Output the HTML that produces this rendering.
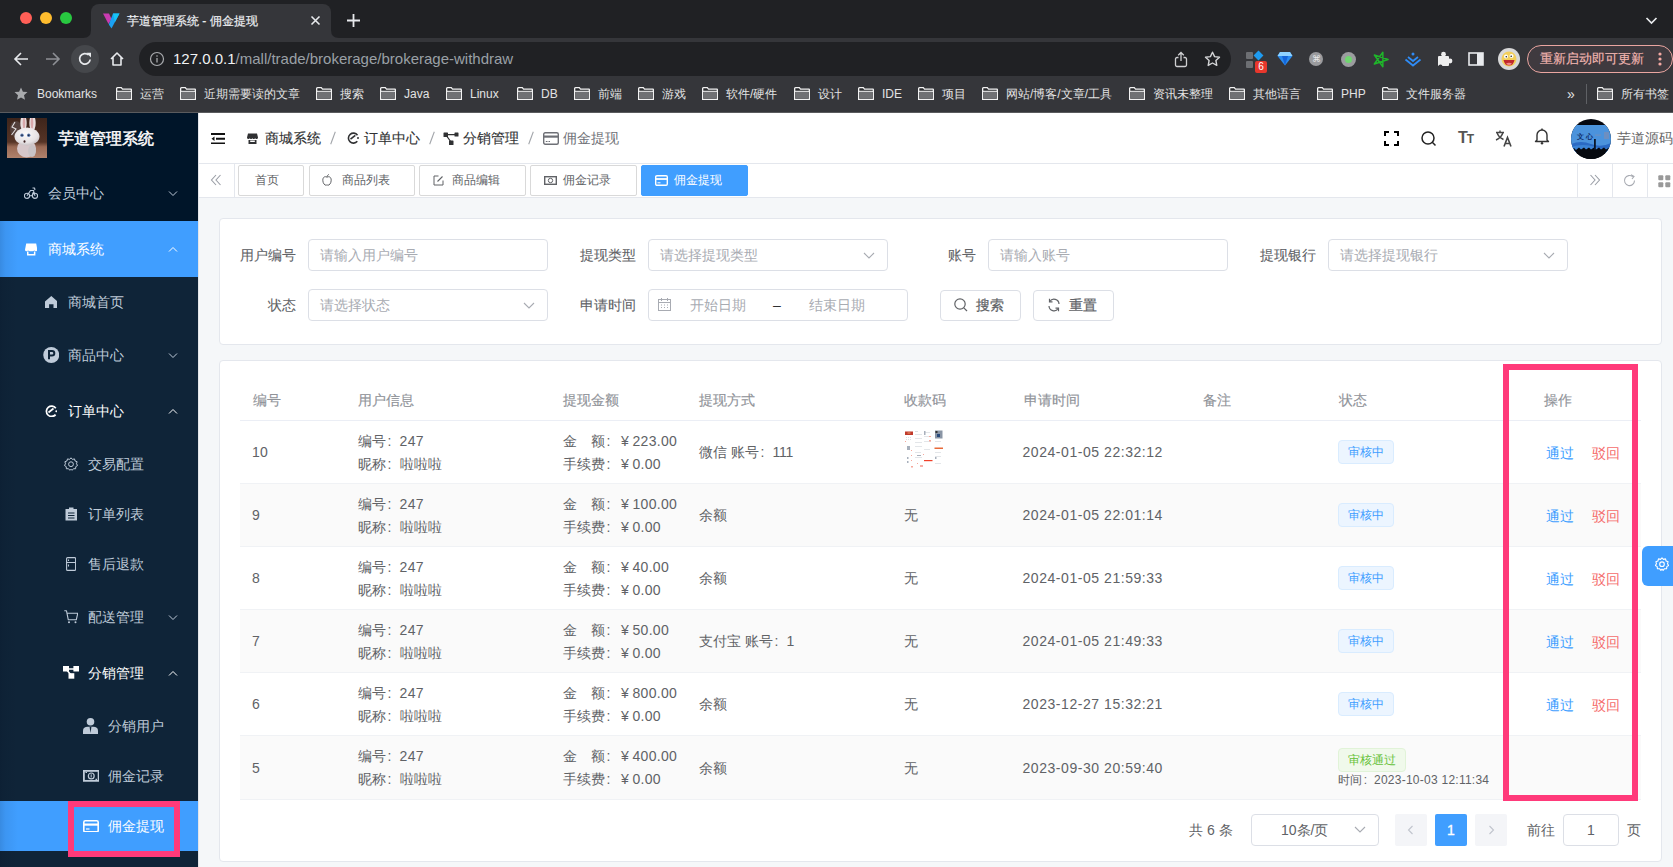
<!DOCTYPE html>
<html><head><meta charset="utf-8">
<style>
*{box-sizing:border-box;margin:0;padding:0}
html,body{width:1673px;height:867px;overflow:hidden;background:#202124;font-family:"Liberation Sans",sans-serif;}
.a{position:absolute}
svg{display:block}
/* chrome */
#tabstrip{left:0;top:0;width:1673px;height:38px;background:#202124}
.tl{width:12px;height:12px;border-radius:50%;top:11.5px}
#tab{left:91px;top:4px;width:240px;height:34px;background:#35363a;border-radius:8px 8px 0 0}
#toolbar{left:0;top:38px;width:1673px;height:38px;background:#35363a}
#omni{left:139px;top:42px;width:1092px;height:34px;background:#202124;border-radius:17px}
#bmbar{left:0;top:76px;width:1673px;height:36px;background:#35363a}
.bm{top:85px;height:18px;font-size:12px;line-height:18px;color:#e3e3e3;white-space:nowrap}
.fold{top:87px;width:16px;height:13px}
/* app */
#side{left:0;top:112px;width:198px;height:755px;background:#001529;overflow:hidden}
#main{left:198px;top:112px;width:1475px;height:755px;background:#f5f7f9}
.mi{position:absolute;left:0;width:198px;color:#bfcbd9;font-size:14px;white-space:nowrap}
.mi .t{position:absolute;top:50%;transform:translateY(-50%);line-height:20px}
.mi .ic{position:absolute;top:50%;transform:translateY(-50%)}
.arr{position:absolute;left:168px;top:50%;margin-top:-4px;width:10px;height:7px}
.sub{background:#0f2438}
</style></head><body>
<!-- ============ BROWSER CHROME ============ -->
<div id="tabstrip" class="a"></div>
<div class="a tl" style="left:20px;background:#ff5f57"></div>
<div class="a tl" style="left:40px;background:#febc2e"></div>
<div class="a tl" style="left:60px;background:#28c840"></div>
<div id="tab" class="a"></div>
<svg class="a" style="left:83px;top:30px" width="8" height="8"><path d="M0 8 Q8 8 8 0 L8 8Z" fill="#35363a"/></svg>
<svg class="a" style="left:331px;top:30px" width="8" height="8"><path d="M8 8 Q0 8 0 0 L0 8Z" fill="#35363a"/></svg>
<svg class="a" style="left:102px;top:12px" width="18" height="17" viewBox="0 0 18 17"><path d="M1 1.5 L7 1.5 L9.5 7 L6.5 12Z" fill="#c93bb0"/><path d="M11 1.5 L17.5 1.5 L9.5 16.5 L6.8 12.5Z" fill="#1ba1f2"/><path d="M11 1.5 L17.5 1.5 L13 10Z" fill="#17c5f5"/></svg>
<div class="a" style="left:127px;top:12.5px;font-size:12px;line-height:16px;color:#eceef1;white-space:nowrap;-webkit-text-stroke:0.2px">芋道管理系统 - 佣金提现</div>
<svg class="a" style="left:310px;top:15px" width="11" height="11"><path d="M1.5 1.5L9.5 9.5M9.5 1.5L1.5 9.5" stroke="#e8eaed" stroke-width="1.6"/></svg>
<svg class="a" style="left:346px;top:13px" width="15" height="15"><path d="M7.5 1V14M1 7.5H14" stroke="#e8eaed" stroke-width="1.8"/></svg>
<svg class="a" style="left:1645px;top:16px" width="13" height="9"><path d="M1.5 2L6.5 7L11.5 2" stroke="#e8eaed" stroke-width="1.7" fill="none"/></svg>

<div id="toolbar" class="a"></div>
<svg class="a" style="left:13px;top:52px" width="16" height="14"><path d="M15 7H2M8 1L2 7L8 13" stroke="#e8eaed" stroke-width="1.6" fill="none"/></svg>
<svg class="a" style="left:45px;top:52px" width="16" height="14"><path d="M1 7H14M8 1L14 7L8 13" stroke="#8e9095" stroke-width="1.6" fill="none"/></svg>
<div class="a" style="left:71px;top:45px;width:28px;height:28px;border-radius:50%;background:#45474b"></div>
<svg class="a" style="left:77px;top:51px" width="16" height="16" viewBox="0 0 16 16"><path d="M13.2 8.5A5.3 5.3 0 1 1 11.6 4" stroke="#e8eaed" stroke-width="1.7" fill="none"/><path d="M9.3 1.8H14V6.5Z" fill="#e8eaed"/></svg>
<svg class="a" style="left:109px;top:51px" width="16" height="16" viewBox="0 0 16 16"><path d="M2 8L8 2L14 8M4 6.5V14H12V6.5" stroke="#e8eaed" stroke-width="1.6" fill="none" stroke-linejoin="round"/></svg>
<div id="omni" class="a"></div>
<svg class="a" style="left:149px;top:51px" width="16" height="16"><circle cx="8" cy="8" r="6.5" stroke="#a9abae" stroke-width="1.2" fill="none"/><path d="M8 7V11.5" stroke="#a9abae" stroke-width="1.3"/><circle cx="8" cy="5" r="0.8" fill="#a9abae"/></svg>
<div class="a" style="left:173px;top:50px;font-size:15px;line-height:18px;white-space:nowrap;color:#9aa0a6"><span style="color:#f1f3f4">127.0.0.1</span>/mall/trade/brokerage/brokerage-withdraw</div>
<svg class="a" style="left:1174px;top:51px" width="14" height="17" viewBox="0 0 14 17"><path d="M7 1.5V10M4.2 4.3L7 1.5L9.8 4.3" stroke="#cfd0d2" stroke-width="1.3" fill="none"/><path d="M4.5 6.5H3A1.5 1.5 0 0 0 1.5 8V14A1.5 1.5 0 0 0 3 15.5H11A1.5 1.5 0 0 0 12.5 14V8A1.5 1.5 0 0 0 11 6.5H9.5" stroke="#cfd0d2" stroke-width="1.3" fill="none"/></svg>
<svg class="a" style="left:1204px;top:51px" width="17" height="16" viewBox="0 0 17 16"><path d="M8.5 1.2L10.6 5.6L15.5 6.2L11.9 9.5L12.8 14.4L8.5 12L4.2 14.4L5.1 9.5L1.5 6.2L6.4 5.6Z" stroke="#d4d5d7" stroke-width="1.4" fill="none" stroke-linejoin="round"/></svg>

<!-- extensions -->
<div class="a" style="left:1246px;top:52px;width:7px;height:7px;background:#6d6f73;border-radius:1px"></div>
<div class="a" style="left:1246px;top:61px;width:7px;height:7px;background:#6d6f73;border-radius:1px"></div>
<div class="a" style="left:1255px;top:52px;width:7px;height:7px;background:#1e9bf0;transform:rotate(45deg)"></div>
<div class="a" style="left:1255px;top:61px;width:12px;height:12px;background:#e8372c;border-radius:2px;color:#fff;font-size:10px;line-height:12px;text-align:center">6</div>
<svg class="a" style="left:1277px;top:51px" width="16" height="15" viewBox="0 0 16 15"><path d="M3 1H13L15.5 5L8 14.5L0.5 5Z" fill="#2a8cf0"/><path d="M3 1H13L15.5 5H0.5Z" fill="#8fd3ff"/><path d="M5 5L8 14.5L11 5Z" fill="#1565d8"/></svg>
<div class="a" style="left:1309px;top:52px;width:14px;height:14px;border-radius:50%;background:#9a9b9e"></div>
<div class="a" style="left:1312px;top:53px;font-size:9px;color:#e8e8e8;line-height:12px">&#8984;</div>
<div class="a" style="left:1341px;top:52px;width:15px;height:15px;border-radius:50%;background:#9b9c9f"></div>
<div class="a" style="left:1345px;top:56px;width:7px;height:7px;border-radius:50%;background:#6fd66f"></div>
<svg class="a" style="left:1372px;top:51px" width="17" height="17" viewBox="0 0 17 17"><path d="M10.85 1.27 L10.85 15.73 L2.35 4.03 L16.10 8.50 L2.35 12.97Z" stroke="#1fb52a" stroke-width="1.5" fill="none" stroke-linejoin="round"/></svg>
<svg class="a" style="left:1404px;top:51px" width="18" height="16" viewBox="0 0 18 16"><circle cx="9" cy="3" r="1.5" fill="#2f8cf6"/><path d="M4 6L9 10L14 6M1.5 8.5L9 14.5L16.5 8.5" stroke="#2f8cf6" stroke-width="1.8" fill="none"/></svg>
<svg class="a" style="left:1437px;top:51px" width="16" height="16" viewBox="0 0 16 16"><rect x="1" y="5" width="11" height="10" rx="1" fill="#eee"/><circle cx="6.5" cy="3.2" r="2.4" fill="#eee"/><circle cx="13" cy="10" r="2.4" fill="#eee"/><circle cx="3.5" cy="15.5" r="2" fill="#35363a"/></svg>
<svg class="a" style="left:1468px;top:52px" width="16" height="14"><rect x="1" y="1" width="14" height="12" stroke="#e8eaed" stroke-width="1.6" fill="none"/><rect x="9" y="1" width="6" height="12" fill="#e8eaed"/></svg>
<div class="a" style="left:1498px;top:48px;width:22px;height:22px;border-radius:50%;background:#d9d9d9"></div>
<svg class="a" style="left:1500px;top:50px" width="18" height="18" viewBox="0 0 18 18"><circle cx="9" cy="9" r="7.5" fill="#f3cf5a"/><circle cx="6" cy="6.5" r="2" fill="#fff"/><circle cx="11.5" cy="6" r="2" fill="#fff"/><circle cx="6.3" cy="6.7" r="0.8" fill="#222"/><circle cx="11.2" cy="6.2" r="0.8" fill="#222"/><path d="M3.5 10H14.5Q13.5 15.5 9 15.5Q4.5 15.5 3.5 10Z" fill="#c0282d"/><path d="M6 13.5Q9 12 12 13.5Q10.5 15 9 15Q7.5 15 6 13.5Z" fill="#f08a8a"/></svg>
<div class="a" style="left:1527px;top:45px;width:146px;height:28px;border-radius:14px;border:1.3px solid #eaa6a1;background:#3f3a3f"></div>
<div class="a" style="left:1540px;top:51px;font-size:13px;line-height:16px;color:#f2b6b1;white-space:nowrap;-webkit-text-stroke:0.15px">重新启动即可更新</div>
<svg class="a" style="left:1657px;top:51px" width="6" height="16"><circle cx="3" cy="3" r="1.6" fill="#f4a9a3"/><circle cx="3" cy="8" r="1.6" fill="#f4a9a3"/><circle cx="3" cy="13" r="1.6" fill="#f4a9a3"/></svg>
<!-- bookmarks -->
<div id="bmbar" class="a"></div>
<svg class="a" style="left:14px;top:87px" width="14" height="14" viewBox="0 0 14 14"><path d="M7 0.5L8.9 4.7L13.5 5.1L10 8.2L11 12.8L7 10.4L3 12.8L4 8.2L0.5 5.1L5.1 4.7Z" fill="#a8aaad"/></svg>
<div class="bm a" style="left:37px">Bookmarks</div>
<svg class="a fold" style="left:116px"><use href="#fd"/></svg><div class="bm a" style="left:140px">运营</div>
<svg class="a fold" style="left:180px"><use href="#fd"/></svg><div class="bm a" style="left:204px">近期需要读的文章</div>
<svg class="a fold" style="left:316px"><use href="#fd"/></svg><div class="bm a" style="left:340px">搜索</div>
<svg class="a fold" style="left:380px"><use href="#fd"/></svg><div class="bm a" style="left:404px">Java</div>
<svg class="a fold" style="left:446px"><use href="#fd"/></svg><div class="bm a" style="left:470px">Linux</div>
<svg class="a fold" style="left:517px"><use href="#fd"/></svg><div class="bm a" style="left:541px">DB</div>
<svg class="a fold" style="left:574px"><use href="#fd"/></svg><div class="bm a" style="left:598px">前端</div>
<svg class="a fold" style="left:638px"><use href="#fd"/></svg><div class="bm a" style="left:662px">游戏</div>
<svg class="a fold" style="left:702px"><use href="#fd"/></svg><div class="bm a" style="left:726px">软件/硬件</div>
<svg class="a fold" style="left:794px"><use href="#fd"/></svg><div class="bm a" style="left:818px">设计</div>
<svg class="a fold" style="left:858px"><use href="#fd"/></svg><div class="bm a" style="left:882px">IDE</div>
<svg class="a fold" style="left:918px"><use href="#fd"/></svg><div class="bm a" style="left:942px">项目</div>
<svg class="a fold" style="left:982px"><use href="#fd"/></svg><div class="bm a" style="left:1006px">网站/博客/文章/工具</div>
<svg class="a fold" style="left:1129px"><use href="#fd"/></svg><div class="bm a" style="left:1153px">资讯未整理</div>
<svg class="a fold" style="left:1229px"><use href="#fd"/></svg><div class="bm a" style="left:1253px">其他语言</div>
<svg class="a fold" style="left:1317px"><use href="#fd"/></svg><div class="bm a" style="left:1341px">PHP</div>
<svg class="a fold" style="left:1382px"><use href="#fd"/></svg><div class="bm a" style="left:1406px">文件服务器</div>
<svg class="a fold" style="left:1597px"><use href="#fd"/></svg><div class="bm a" style="left:1621px">所有书签</div>
<div class="bm a" style="left:1567px;font-size:14px">&raquo;</div>
<div class="a" style="left:1586px;top:84px;width:1px;height:20px;background:#5f6165"></div>
<svg width="0" height="0" style="position:absolute"><defs><symbol id="fd" viewBox="0 0 16 13"><path d="M0.65 1.8A1 1 0 0 1 1.6 0.65H5.3L6.5 2.1H14.9A0.5 0.5 0 0 1 15.35 2.6V12.35H0.65Z" fill="#2a2b2e" stroke="#f2f2f2" stroke-width="1.3"/><rect x="1.3" y="4.6" width="13.4" height="7.1" fill="#707174"/><path d="M0.65 4.3H15.35" stroke="#f2f2f2" stroke-width="1.1"/></symbol></defs></svg>


<!-- ============ APP ============ -->
<div id="side" class="a">
 <svg class="a" style="left:7px;top:6px" width="40" height="40" viewBox="0 0 40 40"><defs><linearGradient id="lg" x1="0" y1="0" x2="0" y2="1"><stop offset="0" stop-color="#3e251b"/><stop offset="0.6" stop-color="#563426"/><stop offset="0.72" stop-color="#9a6a55"/><stop offset="1" stop-color="#b0826c"/></linearGradient><radialGradient id="rh" cx="0.45" cy="0.35" r="0.65"><stop offset="0" stop-color="#fbfafa"/><stop offset="0.75" stop-color="#e6e2e4"/><stop offset="1" stop-color="#c8c2c5"/></radialGradient></defs><rect width="40" height="40" fill="url(#lg)"/><ellipse cx="9" cy="11" rx="6" ry="8" fill="#5a4a48" opacity="0.7"/><path d="M8 4L5 9L9 11L4.5 17" stroke="#e0dcde" stroke-width="1.1" fill="none"/><ellipse cx="16.5" cy="5" rx="3.2" ry="8" fill="#e8dede"/><ellipse cx="25.5" cy="5" rx="3.2" ry="8" fill="#e8dede"/><ellipse cx="17" cy="5" rx="1.3" ry="6" fill="#d8a8aa"/><ellipse cx="25" cy="5" rx="1.3" ry="6" fill="#d8a8aa"/><ellipse cx="19.5" cy="30.5" rx="9.5" ry="9" fill="#d6c7ca"/><ellipse cx="25" cy="33" rx="4" ry="6" fill="#c9c3c6"/><ellipse cx="20" cy="18.5" rx="12.5" ry="9" fill="url(#rh)"/><circle cx="15" cy="17.3" r="1.7" fill="#5a7ab0"/><circle cx="21.7" cy="17.3" r="1.7" fill="#5a7ab0"/><circle cx="15" cy="17.3" r="0.8" fill="#1a2030"/><circle cx="21.7" cy="17.3" r="0.8" fill="#1a2030"/><ellipse cx="17.5" cy="23.5" rx="1" ry="1.2" fill="#3a2020"/></svg>
 <div class="a" style="left:58px;top:15.5px;font-size:15.7px;-webkit-text-stroke:0.45px;color:#fff;line-height:22px;white-space:nowrap">芋道管理系统</div>
 <div class="a sub" style="left:0;top:165px;width:198px;height:590px"></div>
 <div class="a" style="left:0;top:109px;width:198px;height:56px;background:#409eff"></div>
 <div class="a" style="left:0;top:689px;width:198px;height:50px;background:#409eff"></div>
 <div class="a" style="left:0;top:109px;width:18px;height:646px;background:linear-gradient(90deg,rgba(0,10,30,0.13),rgba(0,10,30,0.06) 30%,rgba(0,10,30,0))"></div>
</div>
<div class="a" style="left:48px;top:183px;font-size:14px;line-height:20px;color:#bfcbd9;white-space:nowrap">会员中心</div><svg class="a" style="left:24px;top:187px;color:#bfcbd9" width="14" height="12" viewBox="0 0 14 12"><circle cx="3" cy="8.8" r="2.6" stroke="currentColor" stroke-width="1.1" fill="none"/><circle cx="11" cy="8.8" r="2.6" stroke="currentColor" stroke-width="1.1" fill="none"/><path d="M3 8.8L6.5 3.5H9.5L11 8.8M5.2 8.8H8L10 3.5M8.5 1H10.5L11 3" stroke="currentColor" stroke-width="1.1" fill="none" stroke-linejoin="round"/></svg><svg class="a" style="left:168px;top:189.5px" width="10" height="7" viewBox="0 0 10 7"><path d="M1 1.5L5 5.5L9 1.5" stroke="#bfcbd9" stroke-width="1" fill="none"/></svg>
<div class="a" style="left:48px;top:239px;font-size:14px;line-height:20px;color:#fff;white-space:nowrap">商城系统</div><svg class="a" style="left:25px;top:242.5px;color:#fff" width="12.4" height="13" viewBox="0 0 12.4 13"><path d="M1.2 0.5H11.2L12.4 6.8Q12.4 8 11.3 8.2Q10.2 8.3 9.3 7.6Q8.3 8.4 7.2 8.2Q6.2 8.4 5.2 8.2Q4.2 8.4 3.1 7.6Q2.2 8.3 1.1 8.2Q0 8 0 6.8Z" fill="currentColor"/><path d="M2 8.6H3.5V11H8.9V8.6H10.4V12.6H2Z" fill="currentColor"/></svg><svg class="a" style="left:168px;top:245.5px" width="10" height="7" viewBox="0 0 10 7"><path d="M1 5.5L5 1.5L9 5.5" stroke="#fff" stroke-width="1" fill="none"/></svg>
<div class="a" style="left:68px;top:292px;font-size:14px;line-height:20px;color:#bfcbd9;white-space:nowrap">商城首页</div><svg class="a" style="left:44.7px;top:296px;color:#bfcbd9" width="12.6" height="12" viewBox="0 0 12.6 12"><path d="M6.3 0L12.6 5.6V12H8.5V8.2H4.1V12H0V5.6Z" fill="currentColor"/></svg>
<div class="a" style="left:68px;top:345px;font-size:14px;line-height:20px;color:#bfcbd9;white-space:nowrap">商品中心</div><svg class="a" style="left:42.7px;top:347px;color:#bfcbd9" width="16.5" height="16" viewBox="0 0 16.5 16"><circle cx="8.25" cy="8" r="8" fill="currentColor"/><path d="M6 12.2V4H9A2.3 2.3 0 0 1 9 8.6H6" stroke="#0f2438" stroke-width="2" fill="none"/></svg><svg class="a" style="left:168px;top:351.5px" width="10" height="7" viewBox="0 0 10 7"><path d="M1 1.5L5 5.5L9 1.5" stroke="#bfcbd9" stroke-width="1" fill="none"/></svg>
<div class="a" style="left:68px;top:401px;font-size:14px;line-height:20px;color:#fff;white-space:nowrap">订单中心</div><svg class="a" style="left:44.7px;top:404.7px;color:#fff" width="12.3" height="12" viewBox="0 0 12.3 12"><path d="M10.8 3.2A5.2 5.2 0 1 0 10.6 9.6" stroke="currentColor" stroke-width="1.7" fill="none"/><path d="M3.5 7.5L8.5 3.5" stroke="currentColor" stroke-width="1.7"/><circle cx="11.3" cy="6.2" r="1" fill="currentColor"/></svg><svg class="a" style="left:168px;top:407.5px" width="10" height="7" viewBox="0 0 10 7"><path d="M1 5.5L5 1.5L9 5.5" stroke="#fff" stroke-width="1" fill="none"/></svg>
<div class="a" style="left:88px;top:454px;font-size:14px;line-height:20px;color:#bfcbd9;white-space:nowrap">交易配置</div><svg class="a" style="left:64px;top:456.7px;color:#bfcbd9" width="14" height="14" viewBox="0 0 14 14"><path d="M7 0.8L8.4 2.4L10.5 1.9L11.1 4L13.1 4.7L12.5 6.8L13.6 8.5L11.8 9.6L11.6 11.8L9.5 11.7L8.1 13.3L7 12.2L5.9 13.3L4.5 11.7L2.4 11.8L2.2 9.6L0.4 8.5L1.5 6.8L0.9 4.7L2.9 4L3.5 1.9L5.6 2.4Z" stroke="currentColor" stroke-width="1" fill="none" stroke-linejoin="round"/><circle cx="7" cy="7.2" r="2.4" stroke="currentColor" stroke-width="1" fill="none"/></svg>
<div class="a" style="left:88px;top:504px;font-size:14px;line-height:20px;color:#bfcbd9;white-space:nowrap">订单列表</div><svg class="a" style="left:64.75px;top:507.3px;color:#bfcbd9" width="12.5" height="13.5" viewBox="0 0 12.5 13.5"><path d="M0.5 2H12V13.5H0.5Z" fill="currentColor"/><path d="M4 0.5H8.5V3H4Z" fill="currentColor"/><path d="M3 6H9.5M3 8.5H9.5M3 11H9.5" stroke="#0f2438" stroke-width="1"/></svg>
<div class="a" style="left:88px;top:554px;font-size:14px;line-height:20px;color:#bfcbd9;white-space:nowrap">售后退款</div><svg class="a" style="left:66px;top:557.3px;color:#bfcbd9" width="10.2" height="14" viewBox="0 0 10.2 14"><rect x="0.6" y="0.6" width="9" height="12.8" rx="1" stroke="currentColor" stroke-width="1.1" fill="none"/><path d="M0.6 5.5H9.6M2.5 2.5V4M2.5 7.5V9.5" stroke="currentColor" stroke-width="1.1"/></svg>
<div class="a" style="left:88px;top:607px;font-size:14px;line-height:20px;color:#bfcbd9;white-space:nowrap">配送管理</div><svg class="a" style="left:64px;top:610.4px;color:#bfcbd9" width="14.4" height="13.6" viewBox="0 0 14.4 13.6"><path d="M0.3 0.8H2.5L4.3 9.8H12.3L13.8 3.2H3.2" stroke="currentColor" stroke-width="1.1" fill="none" stroke-linejoin="round"/><circle cx="5" cy="12.3" r="1" fill="currentColor"/><circle cx="11.5" cy="12.3" r="1" fill="currentColor"/></svg><svg class="a" style="left:168px;top:613.5px" width="10" height="7" viewBox="0 0 10 7"><path d="M1 1.5L5 5.5L9 1.5" stroke="#bfcbd9" stroke-width="1" fill="none"/></svg>
<div class="a" style="left:88px;top:663px;font-size:14px;line-height:20px;color:#fff;white-space:nowrap">分销管理</div><svg class="a" style="left:62.6px;top:666.4px;color:#fff" width="16.4" height="12.7" viewBox="0 0 16.4 12.7"><rect x="0" y="0" width="6" height="5.5" fill="currentColor"/><rect x="10.4" y="0" width="6" height="5.5" fill="currentColor"/><rect x="5.5" y="7.2" width="5.8" height="5.5" fill="currentColor"/><path d="M3 3H13M3 3L8 9" stroke="currentColor" stroke-width="1.5"/></svg><svg class="a" style="left:168px;top:669.5px" width="10" height="7" viewBox="0 0 10 7"><path d="M1 5.5L5 1.5L9 5.5" stroke="#fff" stroke-width="1" fill="none"/></svg>
<div class="a" style="left:108px;top:716px;font-size:14px;line-height:20px;color:#bfcbd9;white-space:nowrap">分销用户</div><svg class="a" style="left:83.4px;top:718px;color:#bfcbd9" width="15" height="16" viewBox="0 0 15 16"><circle cx="7.5" cy="3.8" r="3.8" fill="currentColor"/><path d="M0 16V12.5C0 10 2 8.8 4.5 8.8H10.5C13 8.8 15 10 15 12.5V16Z" fill="currentColor"/><path d="M6.6 9L7.5 15L8.4 9Z" fill="#0f2438"/></svg>
<div class="a" style="left:108px;top:766px;font-size:14px;line-height:20px;color:#bfcbd9;white-space:nowrap">佣金记录</div><svg class="a" style="left:82.75px;top:770px;color:#bfcbd9" width="16.5" height="11.75" viewBox="0 0 16.5 11.75"><rect x="0.9" y="0.9" width="14.7" height="9.95" stroke="currentColor" stroke-width="1.8" fill="none"/><circle cx="8.25" cy="5.9" r="2.9" stroke="currentColor" stroke-width="1.2" fill="none"/><path d="M2.5 2.5H4M12.5 9.3H14" stroke="currentColor" stroke-width="1.2"/><path d="M8.2 4.3V7.5" stroke="currentColor" stroke-width="1"/></svg>
<div class="a" style="left:108px;top:816px;font-size:14px;line-height:20px;color:#fff;white-space:nowrap">佣金提现</div><svg class="a" style="left:83px;top:819.5px;color:#fff" width="16" height="12.7" viewBox="0 0 16 12.7"><rect x="0.8" y="0.8" width="14.4" height="11.1" rx="1.5" stroke="currentColor" stroke-width="1.6" fill="none"/><path d="M0.8 4.6H15.2" stroke="currentColor" stroke-width="2.2"/><path d="M3 9H6.5" stroke="currentColor" stroke-width="1.2"/></svg>
<div class="a" style="left:67.5px;top:801px;width:112px;height:56px;border:6.3px solid #ff3a7a"></div>

<div class="a" style="left:198px;top:112px;width:1475px;height:755px;background:#f5f7f9"></div>
<div class="a" style="left:198px;top:112px;width:1475px;height:51px;background:#fff"></div>
<div class="a" style="left:198px;top:163px;width:1475px;height:35px;background:#fff;border-top:1px solid #e4e7ed;border-bottom:1px solid #e4e7ed"></div>
<div class="a" style="left:198px;top:112px;width:1px;height:755px;background:#e3e5e9"></div>
<svg class="a" style="left:211px;top:132.5px" width="14" height="11.5" viewBox="0 0 14 11.5"><path d="M0 1H14M5 5.75H14M0 10.5H14" stroke="#111" stroke-width="2"/><path d="M0.5 5.75L3.5 3.6V7.9Z" fill="#111"/></svg><svg class="a" style="left:247px;top:132.5px;color:#303133" width="11" height="11" viewBox="0 0 11 11"><path d="M1 0.5H10L11 4.5C11 5.5 10 6 9.5 6C9 6 8.3 5.6 8.2 5.2C8 5.6 7.3 6 6.8 6C6.2 6 5.5 5.6 5.5 5.2C5.3 5.6 4.6 6 4 6C3.5 6 2.8 5.6 2.7 5.2C2.5 5.6 2 6 1.5 6C1 6 0 5.5 0 4.5Z" fill="currentColor"/><path d="M1.5 7H9.5V11H1.5Z" fill="currentColor"/><path d="M3.2 7.5H7.8V9H3.2Z" fill="#fff"/></svg><div class="a" style="left:265px;top:128px;font-size:14px;line-height:20px;color:#303133;white-space:nowrap;-webkit-text-stroke:0.12px">商城系统</div><svg class="a" style="left:330px;top:131px" width="6" height="14" viewBox="0 0 6 14"><path d="M0.7 13.3L5.3 0.7" stroke="#a3a6ab" stroke-width="1.1"/></svg><svg class="a" style="left:347px;top:132.0px;color:#303133" width="12" height="12" viewBox="0 0 12 12"><path d="M10.5 3.2A5 5 0 1 0 10.3 9.3" stroke="currentColor" stroke-width="1.6" fill="none"/><path d="M3.5 7.2L8.3 3.4" stroke="currentColor" stroke-width="1.6"/><circle cx="11" cy="6" r="1" fill="currentColor"/></svg><div class="a" style="left:364px;top:128px;font-size:14px;line-height:20px;color:#303133;white-space:nowrap;-webkit-text-stroke:0.12px">订单中心</div><svg class="a" style="left:429px;top:131px" width="6" height="14" viewBox="0 0 6 14"><path d="M0.7 13.3L5.3 0.7" stroke="#a3a6ab" stroke-width="1.1"/></svg><svg class="a" style="left:443px;top:131.5px;color:#303133" width="16" height="13" viewBox="0 0 16 13"><rect x="0.5" y="0.5" width="4.5" height="4.5" rx="0.6" fill="currentColor"/><rect x="11.5" y="0.5" width="4" height="4" rx="0.6" fill="currentColor"/><rect x="6" y="8.5" width="4.5" height="4.5" rx="0.6" fill="currentColor"/><path d="M2.7 2.7H12M2.7 2.7L8 10" stroke="currentColor" stroke-width="1.2"/></svg><div class="a" style="left:463px;top:128px;font-size:14px;line-height:20px;color:#303133;white-space:nowrap;-webkit-text-stroke:0.12px">分销管理</div><svg class="a" style="left:528px;top:131px" width="6" height="14" viewBox="0 0 6 14"><path d="M0.7 13.3L5.3 0.7" stroke="#a3a6ab" stroke-width="1.1"/></svg><svg class="a" style="left:543px;top:131.5px;color:#6e7076" width="16" height="13" viewBox="0 0 16 13"><rect x="0.7" y="0.7" width="14.6" height="11.6" rx="1.5" stroke="currentColor" stroke-width="1.4" fill="none"/><path d="M0.7 4.6H15.3" stroke="currentColor" stroke-width="2.2"/><path d="M2.8 9.5H4.5M5.5 9.5H7" stroke="currentColor" stroke-width="1"/></svg><div class="a" style="left:563px;top:128px;font-size:14px;line-height:20px;color:#6e7076;white-space:nowrap;">佣金提现</div><svg class="a" style="left:1384px;top:130.5px" width="15" height="15" viewBox="0 0 15 15"><path d="M1 5V1H5M10 1H14V5M14 10V14H10M5 14H1V10" stroke="#000" stroke-width="2" fill="none"/></svg><svg class="a" style="left:1421px;top:130.5px" width="16" height="16" viewBox="0 0 16 16"><circle cx="7" cy="7" r="6" stroke="#222" stroke-width="1.5" fill="none"/><path d="M11.3 11.3L14.5 14.5" stroke="#222" stroke-width="1.5"/></svg><div class="a" style="left:1458px;top:128px;font-size:16px;line-height:20px;font-weight:bold;color:#555;letter-spacing:-1px">T<span style="font-size:12px">T</span></div><svg class="a" style="left:1495px;top:130px" width="18" height="17" viewBox="0 0 18 17"><path d="M1 2.5H9M5 0.5V2.5M2 2.5C3 6 5 8 8.5 9.5M8 2.5C7 6 4.5 8.5 1 10" stroke="#444" stroke-width="1.4" fill="none"/><path d="M9 16.5L12.5 7.5L16 16.5M10.3 13.5H14.7" stroke="#444" stroke-width="1.6" fill="none"/></svg><svg class="a" style="left:1534px;top:128px" width="16" height="17" viewBox="0 0 16 17"><path d="M3 12V7A5 5 0 0 1 13 7V12L14.5 13.5H1.5Z" stroke="#333" stroke-width="1.4" fill="none" stroke-linejoin="round"/><path d="M8 0.5V2" stroke="#333" stroke-width="1.4"/><circle cx="8" cy="15.3" r="1.2" fill="#333"/></svg><svg class="a" style="left:1571px;top:118.5px" width="40" height="40" viewBox="0 0 40 40"><defs><clipPath id="avc"><circle cx="20" cy="20" r="20"/></clipPath></defs><g clip-path="url(#avc)"><rect width="40" height="40" fill="#050810"/><rect y="6" width="40" height="28" fill="#4b93dc"/><path d="M0 25Q10 21 20 25T40 24V34H0Z" fill="#2a6ac4"/><path d="M0 28Q12 24 24 28T40 27V34H0Z" fill="#3b84d6"/><path d="M0 31L3 29L5 31L8 28.5L10 30.5L13 28.5L15 30.5L18 28.5L20 30.5L23 28.5L25 30.5L28 28.5L30 30.5L33 28.5L35 30.5L38 28.5L40 29.5V40H0Z" fill="#06090f"/><rect x="23" y="20" width="1.8" height="11" fill="#0a1628"/></g><text x="6" y="19.5" font-size="6.5" font-weight="bold" fill="#0e2a66" font-family="Liberation Sans,sans-serif">文 心</text><rect x="24" y="15.5" width="6" height="1.2" fill="#6d8fc0"/><rect x="33" y="13" width="5" height="7" fill="#6d8fc0"/></svg><div class="a" style="left:1617px;top:128px;font-size:14px;line-height:20px;color:#666;white-space:nowrap">芋道源码</div><svg class="a" style="left:210px;top:174px" width="12" height="12" viewBox="0 0 12 12"><path d="M6 1L1.5 6L6 11M10.5 1L6 6L10.5 11" stroke="#9a9ea6" stroke-width="1.1" fill="none"/></svg><div class="a" style="left:234px;top:164px;width:1px;height:33px;background:#e4e7ed"></div><div class="a" style="left:238px;top:165px;width:66px;height:30.5px;background:#fff;border:1px solid #d9d9d9;border-radius:2px"></div><div class="a" style="left:254.5px;top:172px;font-size:12px;line-height:16px;color:#606266;white-space:nowrap">首页</div><div class="a" style="left:308.5px;top:165px;width:106.0px;height:30.5px;background:#fff;border:1px solid #d9d9d9;border-radius:2px"></div><svg class="a" style="left:322.0px;top:174.0px;color:#606266" width="10" height="12" viewBox="0 0 10 12"><path d="M5 3.2C3 2 0.8 3 0.8 6.2C0.8 9.3 2.8 11.4 4 11.2C4.5 11.1 4.8 10.9 5 10.9C5.2 10.9 5.5 11.1 6 11.2C7.2 11.4 9.2 9.3 9.2 6.2C9.2 3 7 2 5 3.2Z" stroke="currentColor" stroke-width="1" fill="none"/><path d="M5 3.2C5 2 5.6 1 6.8 0.5" stroke="currentColor" stroke-width="1" fill="none"/></svg><div class="a" style="left:341.5px;top:172px;font-size:12px;line-height:16px;color:#606266;white-space:nowrap">商品列表</div><div class="a" style="left:419px;top:165px;width:107px;height:30.5px;background:#fff;border:1px solid #d9d9d9;border-radius:2px"></div><svg class="a" style="left:432.5px;top:174.5px;color:#606266" width="11" height="11" viewBox="0 0 11 11"><path d="M5.5 1H1V10H10V5.5" stroke="currentColor" stroke-width="1" fill="none"/><path d="M4.5 6.5L9.5 1.5" stroke="currentColor" stroke-width="1.1"/></svg><div class="a" style="left:452px;top:172px;font-size:12px;line-height:16px;color:#606266;white-space:nowrap">商品编辑</div><div class="a" style="left:530px;top:165px;width:107px;height:30.5px;background:#fff;border:1px solid #d9d9d9;border-radius:2px"></div><svg class="a" style="left:543.5px;top:175.5px;color:#606266" width="13" height="9" viewBox="0 0 13 9"><rect x="0.7" y="0.7" width="11.6" height="7.6" stroke="currentColor" stroke-width="1.4" fill="none"/><circle cx="6.5" cy="4.5" r="2.2" stroke="currentColor" stroke-width="1" fill="none"/></svg><div class="a" style="left:563px;top:172px;font-size:12px;line-height:16px;color:#606266;white-space:nowrap">佣金记录</div><div class="a" style="left:641px;top:165px;width:107px;height:30.5px;background:#409eff;border:1px solid #409eff;border-radius:2px"></div><svg class="a" style="left:654.5px;top:174.5px;color:#fff" width="13" height="11" viewBox="0 0 13 11"><rect x="0.7" y="0.7" width="11.6" height="9.6" rx="1.2" stroke="currentColor" stroke-width="1.4" fill="none"/><path d="M0.7 4H12.3" stroke="currentColor" stroke-width="1.8"/><path d="M2.5 7.8H5.5" stroke="currentColor" stroke-width="1"/></svg><div class="a" style="left:674px;top:172px;font-size:12px;line-height:16px;color:#fff;white-space:nowrap">佣金提现</div><div class="a" style="left:1577px;top:164px;width:1px;height:33px;background:#e4e7ed"></div><div class="a" style="left:1612px;top:164px;width:1px;height:33px;background:#e4e7ed"></div><div class="a" style="left:1647px;top:164px;width:1px;height:33px;background:#e4e7ed"></div><svg class="a" style="left:1589px;top:174px" width="12" height="12" viewBox="0 0 12 12"><path d="M6 1L10.5 6L6 11M1.5 1L6 6L1.5 11" stroke="#9a9ea6" stroke-width="1.1" fill="none"/></svg><svg class="a" style="left:1623px;top:173.5px" width="13" height="13" viewBox="0 0 13 13"><path d="M11.5 6.5A5 5 0 1 1 9.8 2.8" stroke="#a8abb2" stroke-width="1.1" fill="none"/><path d="M8 0.8L11 2.5L9 5" stroke="#a8abb2" stroke-width="1.1" fill="none"/></svg><svg class="a" style="left:1658px;top:174.5px" width="13" height="13" viewBox="0 0 13 13"><rect x="0.3" y="0.3" width="5" height="5" rx="1" fill="#999"/><rect x="7.3" y="0.3" width="5" height="5" rx="1" fill="#999"/><rect x="0.3" y="7.3" width="5" height="5" rx="1" fill="#999"/><rect x="7.3" y="7.3" width="5" height="5" rx="1" fill="#999"/></svg><div class="a" style="left:219px;top:218px;width:1443px;height:127px;background:#fff;border:1px solid #e4e7ed;border-radius:4px"></div><div class="a" style="left:196px;top:245px;width:100px;text-align:right;font-size:14px;line-height:20px;color:#606266;white-space:nowrap;-webkit-text-stroke:0.08px">用户编号</div><div class="a" style="left:308px;top:239.25px;width:240px;height:31.5px;border:1px solid #dcdfe6;border-radius:4px;background:#fff"></div><div class="a" style="left:320px;top:245px;font-size:14px;line-height:20px;color:#a8abb2;white-space:nowrap">请输入用户编号</div><div class="a" style="left:536px;top:245px;width:100px;text-align:right;font-size:14px;line-height:20px;color:#606266;white-space:nowrap;-webkit-text-stroke:0.08px">提现类型</div><div class="a" style="left:648px;top:239.25px;width:240px;height:31.5px;border:1px solid #dcdfe6;border-radius:4px;background:#fff"></div><div class="a" style="left:660px;top:245px;font-size:14px;line-height:20px;color:#a8abb2;white-space:nowrap">请选择提现类型</div><svg class="a" style="left:863px;top:251.5px" width="12" height="7" viewBox="0 0 12 7"><path d="M1 1L6 6L11 1" stroke="#a8abb2" stroke-width="1.1" fill="none"/></svg><div class="a" style="left:876px;top:245px;width:100px;text-align:right;font-size:14px;line-height:20px;color:#606266;white-space:nowrap;-webkit-text-stroke:0.08px">账号</div><div class="a" style="left:988px;top:239.25px;width:240px;height:31.5px;border:1px solid #dcdfe6;border-radius:4px;background:#fff"></div><div class="a" style="left:1000px;top:245px;font-size:14px;line-height:20px;color:#a8abb2;white-space:nowrap">请输入账号</div><div class="a" style="left:1216px;top:245px;width:100px;text-align:right;font-size:14px;line-height:20px;color:#606266;white-space:nowrap;-webkit-text-stroke:0.08px">提现银行</div><div class="a" style="left:1328px;top:239.25px;width:240px;height:31.5px;border:1px solid #dcdfe6;border-radius:4px;background:#fff"></div><div class="a" style="left:1340px;top:245px;font-size:14px;line-height:20px;color:#a8abb2;white-space:nowrap">请选择提现银行</div><svg class="a" style="left:1543px;top:251.5px" width="12" height="7" viewBox="0 0 12 7"><path d="M1 1L6 6L11 1" stroke="#a8abb2" stroke-width="1.1" fill="none"/></svg><div class="a" style="left:196px;top:295px;width:100px;text-align:right;font-size:14px;line-height:20px;color:#606266;white-space:nowrap;-webkit-text-stroke:0.08px">状态</div><div class="a" style="left:308px;top:289.25px;width:240px;height:31.5px;border:1px solid #dcdfe6;border-radius:4px;background:#fff"></div><div class="a" style="left:320px;top:295px;font-size:14px;line-height:20px;color:#a8abb2;white-space:nowrap">请选择状态</div><svg class="a" style="left:523px;top:301.5px" width="12" height="7" viewBox="0 0 12 7"><path d="M1 1L6 6L11 1" stroke="#a8abb2" stroke-width="1.1" fill="none"/></svg><div class="a" style="left:536px;top:295px;width:100px;text-align:right;font-size:14px;line-height:20px;color:#606266;white-space:nowrap;-webkit-text-stroke:0.08px">申请时间</div><div class="a" style="left:648px;top:289.25px;width:260px;height:31.5px;border:1px solid #dcdfe6;border-radius:4px;background:#fff"></div><svg class="a" style="left:658px;top:298px" width="13" height="13" viewBox="0 0 13 13"><rect x="0.5" y="1.5" width="12" height="11" stroke="#a8abb2" stroke-width="1" fill="none"/><path d="M0.5 4.5H12.5M3.5 0V3M9.5 0V3M3 7H4M6 7H7M9 7H10M3 9.5H4M6 9.5H7M9 9.5H10" stroke="#a8abb2" stroke-width="1"/></svg><div class="a" style="left:690px;top:295px;font-size:14px;line-height:20px;color:#a8abb2">开始日期</div><div class="a" style="left:773px;top:295px;font-size:14px;line-height:20px;color:#303133">–</div><div class="a" style="left:809px;top:295px;font-size:14px;line-height:20px;color:#a8abb2">结束日期</div><div class="a" style="left:940px;top:289.5px;width:80.5px;height:31px;border:1px solid #dcdfe6;border-radius:4px;background:#fff"></div><svg class="a" style="left:954px;top:298px" width="14" height="14" viewBox="0 0 14 14"><circle cx="6" cy="6" r="5.2" stroke="#606266" stroke-width="1.2" fill="none"/><path d="M9.8 9.8L13 13" stroke="#606266" stroke-width="1.2"/></svg><div class="a" style="left:976px;top:295px;font-size:14px;line-height:20px;color:#606266;white-space:nowrap;-webkit-text-stroke:0.2px">搜索</div><div class="a" style="left:1033px;top:289.5px;width:81px;height:31px;border:1px solid #dcdfe6;border-radius:4px;background:#fff"></div><svg class="a" style="left:1047px;top:298px" width="14" height="14" viewBox="0 0 14 14"><path d="M12 6A5 5 0 0 0 2.8 3.5M2 8A5 5 0 0 0 11.2 10.5" stroke="#606266" stroke-width="1.2" fill="none"/><path d="M2.5 0.8V3.8H5.5M11.5 13.2V10.2H8.5" stroke="#606266" stroke-width="1.2" fill="none"/></svg><div class="a" style="left:1069px;top:295px;font-size:14px;line-height:20px;color:#606266;white-space:nowrap;-webkit-text-stroke:0.2px">重置</div><div class="a" style="left:219px;top:360px;width:1443px;height:502px;background:#fff;border:1px solid #e4e7ed;border-radius:4px"></div><div class="a" style="left:252.5px;top:390px;font-size:14px;line-height:20px;color:#909399;white-space:nowrap;-webkit-text-stroke:0.15px">编号</div><div class="a" style="left:357.5px;top:390px;font-size:14px;line-height:20px;color:#909399;white-space:nowrap;-webkit-text-stroke:0.15px">用户信息</div><div class="a" style="left:563.0px;top:390px;font-size:14px;line-height:20px;color:#909399;white-space:nowrap;-webkit-text-stroke:0.15px">提现金额</div><div class="a" style="left:699.0px;top:390px;font-size:14px;line-height:20px;color:#909399;white-space:nowrap;-webkit-text-stroke:0.15px">提现方式</div><div class="a" style="left:904.0px;top:390px;font-size:14px;line-height:20px;color:#909399;white-space:nowrap;-webkit-text-stroke:0.15px">收款码</div><div class="a" style="left:1023.5px;top:390px;font-size:14px;line-height:20px;color:#909399;white-space:nowrap;-webkit-text-stroke:0.15px">申请时间</div><div class="a" style="left:1202.5px;top:390px;font-size:14px;line-height:20px;color:#909399;white-space:nowrap;-webkit-text-stroke:0.15px">备注</div><div class="a" style="left:1338.5px;top:390px;font-size:14px;line-height:20px;color:#909399;white-space:nowrap;-webkit-text-stroke:0.15px">状态</div><div class="a" style="left:1543.5px;top:390px;font-size:14px;line-height:20px;color:#909399;white-space:nowrap;-webkit-text-stroke:0.15px">操作</div><div class="a" style="left:240px;top:420px;width:1401px;height:1px;background:#ebeef5"></div><div class="a" style="left:240px;top:483px;width:1401px;height:1px;background:#f0f2f5"></div><div class="a" style="left:252px;top:442.0px;font-size:14px;line-height:20px;color:#606266;white-space:nowrap;letter-spacing:0.3px">10</div><div class="a" style="left:357.5px;top:430.5px;font-size:14px;line-height:20px;color:#606266;white-space:nowrap;">编号<span style="display:inline-block;width:14px;padding-left:1.9600000000000002px">:</span></div><div class="a" style="left:399.5px;top:430.5px;font-size:14px;line-height:20px;color:#606266;white-space:nowrap;letter-spacing:0.4px">247</div><div class="a" style="left:357.5px;top:453.5px;font-size:14px;line-height:20px;color:#606266;white-space:nowrap;">昵称<span style="display:inline-block;width:14px;padding-left:1.9600000000000002px">:</span></div><div class="a" style="left:399.5px;top:453.5px;font-size:14px;line-height:20px;color:#606266;white-space:nowrap;">啦啦啦</div><div class="a" style="left:562.5px;top:430.5px;font-size:14px;line-height:20px;color:#606266;white-space:nowrap;">金</div><div class="a" style="left:590.5px;top:430.5px;font-size:14px;line-height:20px;color:#606266;white-space:nowrap;">额<span style="display:inline-block;width:14px;padding-left:1.9600000000000002px">:</span></div><div class="a" style="left:621px;top:430.5px;font-size:14px;line-height:20px;color:#606266;white-space:nowrap;">¥</div><div class="a" style="left:632.5px;top:430.5px;font-size:14px;line-height:20px;color:#606266;white-space:nowrap;letter-spacing:0.3px">223.00</div><div class="a" style="left:562.5px;top:453.5px;font-size:14px;line-height:20px;color:#606266;white-space:nowrap;">手续费<span style="display:inline-block;width:14px;padding-left:1.9600000000000002px">:</span></div><div class="a" style="left:621px;top:453.5px;font-size:14px;line-height:20px;color:#606266;white-space:nowrap;">¥</div><div class="a" style="left:632.5px;top:453.5px;font-size:14px;line-height:20px;color:#606266;white-space:nowrap;letter-spacing:0.3px">0.00</div><div class="a" style="left:698.5px;top:442.0px;font-size:14px;line-height:20px;color:#606266;white-space:nowrap;">微信</div><div class="a" style="left:730.5px;top:442.0px;font-size:14px;line-height:20px;color:#606266;white-space:nowrap;">账号<span style="display:inline-block;width:14px;padding-left:1.9600000000000002px">:</span></div><div class="a" style="left:772.5px;top:442.0px;font-size:14px;line-height:20px;color:#606266;white-space:nowrap;letter-spacing:-0.3px">111</div><svg class="a" style="left:903.5px;top:429.5px" width="39" height="39" viewBox="0 0 39 39"><rect width="39" height="39" fill="#fff"/><rect x="1" y="1.5" width="8" height="3.5" fill="#c0392b"/><rect x="3.5" y="2.5" width="3" height="1" fill="#e8a070"/><rect x="31" y="0.5" width="7.5" height="8" fill="#8a95a5"/><rect x="33" y="4" width="3" height="3" fill="#2a4a7a"/><rect x="31.5" y="1" width="2" height="2" fill="#333"/><rect x="30.5" y="17.5" width="8.5" height="1.5" fill="#e86a3a"/><rect x="20" y="30" width="8.5" height="1.2" fill="#f0402a"/><rect x="16" y="35.5" width="3" height="1" fill="#f06050"/><g fill="#dde0e4"><rect x="2" y="7" width="1" height="1"/><rect x="4" y="7" width="1" height="1"/><rect x="6" y="7" width="1" height="1"/><rect x="2" y="9" width="1" height="1"/><rect x="4" y="9" width="1" height="1"/><rect x="6" y="9" width="1" height="1"/><rect x="11" y="1" width="3" height="1"/><rect x="11" y="4" width="7" height="0.8"/><rect x="11" y="8" width="7" height="0.8"/><rect x="11" y="12" width="7" height="0.8"/><rect x="11" y="16" width="7" height="0.8"/><rect x="11" y="22" width="6" height="0.8"/><rect x="11" y="27" width="7" height="0.8"/><rect x="20" y="2" width="6" height="0.8"/><rect x="20" y="6" width="7" height="0.8"/><rect x="20" y="11" width="7" height="0.8"/><rect x="20" y="19" width="6" height="0.8"/><rect x="31" y="11" width="6" height="0.8"/><rect x="31" y="22" width="6" height="0.8"/><rect x="31" y="26" width="6" height="0.8"/><rect x="31" y="33" width="6" height="0.8"/></g><g fill="#a8b0bc"><rect x="20" y="1" width="1.5" height="4"/><rect x="3" y="16" width="3" height="4"/><rect x="3" y="27" width="1.5" height="2"/><rect x="3" y="31" width="1.5" height="2"/><rect x="31" y="27" width="1.5" height="2"/><rect x="13" y="25" width="4" height="1"/></g><g fill="#f6a89c"><rect x="1" y="11" width="1" height="1"/><rect x="7" y="20" width="1" height="1"/><rect x="7" y="25" width="1" height="1"/><rect x="7" y="30" width="1" height="1"/><rect x="7" y="36" width="2" height="1.5"/><rect x="13" y="33" width="1" height="1"/><rect x="25" y="6" width="2" height="1"/><rect x="25" y="10" width="2" height="1.5"/><rect x="19" y="24" width="1" height="1"/></g></svg><div class="a" style="left:1022.5px;top:442.0px;font-size:14px;line-height:20px;color:#606266;white-space:nowrap;letter-spacing:0.55px">2024-01-05 22:32:12</div><div class="a" style="left:1338px;top:440.25px;width:56px;height:24px;background:#ecf5ff;border:1px solid #d9ecff;border-radius:4px;font-size:12px;line-height:23px;color:#409eff;text-align:center">审核中</div><div class="a" style="left:1546px;top:443.0px;font-size:14px;line-height:20px;color:#409eff;white-space:nowrap;">通过</div><div class="a" style="left:1592px;top:443.0px;font-size:14px;line-height:20px;color:#f56c6c;white-space:nowrap;">驳回</div><div class="a" style="left:240px;top:484px;width:1401px;height:62px;background:#fafafa"></div><div class="a" style="left:240px;top:546px;width:1401px;height:1px;background:#f0f2f5"></div><div class="a" style="left:252px;top:505.0px;font-size:14px;line-height:20px;color:#606266;white-space:nowrap;letter-spacing:0.3px">9</div><div class="a" style="left:357.5px;top:493.5px;font-size:14px;line-height:20px;color:#606266;white-space:nowrap;">编号<span style="display:inline-block;width:14px;padding-left:1.9600000000000002px">:</span></div><div class="a" style="left:399.5px;top:493.5px;font-size:14px;line-height:20px;color:#606266;white-space:nowrap;letter-spacing:0.4px">247</div><div class="a" style="left:357.5px;top:516.5px;font-size:14px;line-height:20px;color:#606266;white-space:nowrap;">昵称<span style="display:inline-block;width:14px;padding-left:1.9600000000000002px">:</span></div><div class="a" style="left:399.5px;top:516.5px;font-size:14px;line-height:20px;color:#606266;white-space:nowrap;">啦啦啦</div><div class="a" style="left:562.5px;top:493.5px;font-size:14px;line-height:20px;color:#606266;white-space:nowrap;">金</div><div class="a" style="left:590.5px;top:493.5px;font-size:14px;line-height:20px;color:#606266;white-space:nowrap;">额<span style="display:inline-block;width:14px;padding-left:1.9600000000000002px">:</span></div><div class="a" style="left:621px;top:493.5px;font-size:14px;line-height:20px;color:#606266;white-space:nowrap;">¥</div><div class="a" style="left:632.5px;top:493.5px;font-size:14px;line-height:20px;color:#606266;white-space:nowrap;letter-spacing:0.3px">100.00</div><div class="a" style="left:562.5px;top:516.5px;font-size:14px;line-height:20px;color:#606266;white-space:nowrap;">手续费<span style="display:inline-block;width:14px;padding-left:1.9600000000000002px">:</span></div><div class="a" style="left:621px;top:516.5px;font-size:14px;line-height:20px;color:#606266;white-space:nowrap;">¥</div><div class="a" style="left:632.5px;top:516.5px;font-size:14px;line-height:20px;color:#606266;white-space:nowrap;letter-spacing:0.3px">0.00</div><div class="a" style="left:698.5px;top:505.0px;font-size:14px;line-height:20px;color:#606266;white-space:nowrap;">余额</div><div class="a" style="left:903.5px;top:505.0px;font-size:14px;line-height:20px;color:#606266;white-space:nowrap;">无</div><div class="a" style="left:1022.5px;top:505.0px;font-size:14px;line-height:20px;color:#606266;white-space:nowrap;letter-spacing:0.55px">2024-01-05 22:01:14</div><div class="a" style="left:1338px;top:503.25px;width:56px;height:24px;background:#ecf5ff;border:1px solid #d9ecff;border-radius:4px;font-size:12px;line-height:23px;color:#409eff;text-align:center">审核中</div><div class="a" style="left:1546px;top:506.0px;font-size:14px;line-height:20px;color:#409eff;white-space:nowrap;">通过</div><div class="a" style="left:1592px;top:506.0px;font-size:14px;line-height:20px;color:#f56c6c;white-space:nowrap;">驳回</div><div class="a" style="left:240px;top:609px;width:1401px;height:1px;background:#f0f2f5"></div><div class="a" style="left:252px;top:568.0px;font-size:14px;line-height:20px;color:#606266;white-space:nowrap;letter-spacing:0.3px">8</div><div class="a" style="left:357.5px;top:556.5px;font-size:14px;line-height:20px;color:#606266;white-space:nowrap;">编号<span style="display:inline-block;width:14px;padding-left:1.9600000000000002px">:</span></div><div class="a" style="left:399.5px;top:556.5px;font-size:14px;line-height:20px;color:#606266;white-space:nowrap;letter-spacing:0.4px">247</div><div class="a" style="left:357.5px;top:579.5px;font-size:14px;line-height:20px;color:#606266;white-space:nowrap;">昵称<span style="display:inline-block;width:14px;padding-left:1.9600000000000002px">:</span></div><div class="a" style="left:399.5px;top:579.5px;font-size:14px;line-height:20px;color:#606266;white-space:nowrap;">啦啦啦</div><div class="a" style="left:562.5px;top:556.5px;font-size:14px;line-height:20px;color:#606266;white-space:nowrap;">金</div><div class="a" style="left:590.5px;top:556.5px;font-size:14px;line-height:20px;color:#606266;white-space:nowrap;">额<span style="display:inline-block;width:14px;padding-left:1.9600000000000002px">:</span></div><div class="a" style="left:621px;top:556.5px;font-size:14px;line-height:20px;color:#606266;white-space:nowrap;">¥</div><div class="a" style="left:632.5px;top:556.5px;font-size:14px;line-height:20px;color:#606266;white-space:nowrap;letter-spacing:0.3px">40.00</div><div class="a" style="left:562.5px;top:579.5px;font-size:14px;line-height:20px;color:#606266;white-space:nowrap;">手续费<span style="display:inline-block;width:14px;padding-left:1.9600000000000002px">:</span></div><div class="a" style="left:621px;top:579.5px;font-size:14px;line-height:20px;color:#606266;white-space:nowrap;">¥</div><div class="a" style="left:632.5px;top:579.5px;font-size:14px;line-height:20px;color:#606266;white-space:nowrap;letter-spacing:0.3px">0.00</div><div class="a" style="left:698.5px;top:568.0px;font-size:14px;line-height:20px;color:#606266;white-space:nowrap;">余额</div><div class="a" style="left:903.5px;top:568.0px;font-size:14px;line-height:20px;color:#606266;white-space:nowrap;">无</div><div class="a" style="left:1022.5px;top:568.0px;font-size:14px;line-height:20px;color:#606266;white-space:nowrap;letter-spacing:0.55px">2024-01-05 21:59:33</div><div class="a" style="left:1338px;top:566.25px;width:56px;height:24px;background:#ecf5ff;border:1px solid #d9ecff;border-radius:4px;font-size:12px;line-height:23px;color:#409eff;text-align:center">审核中</div><div class="a" style="left:1546px;top:569.0px;font-size:14px;line-height:20px;color:#409eff;white-space:nowrap;">通过</div><div class="a" style="left:1592px;top:569.0px;font-size:14px;line-height:20px;color:#f56c6c;white-space:nowrap;">驳回</div><div class="a" style="left:240px;top:610px;width:1401px;height:62px;background:#fafafa"></div><div class="a" style="left:240px;top:672px;width:1401px;height:1px;background:#f0f2f5"></div><div class="a" style="left:252px;top:631.0px;font-size:14px;line-height:20px;color:#606266;white-space:nowrap;letter-spacing:0.3px">7</div><div class="a" style="left:357.5px;top:619.5px;font-size:14px;line-height:20px;color:#606266;white-space:nowrap;">编号<span style="display:inline-block;width:14px;padding-left:1.9600000000000002px">:</span></div><div class="a" style="left:399.5px;top:619.5px;font-size:14px;line-height:20px;color:#606266;white-space:nowrap;letter-spacing:0.4px">247</div><div class="a" style="left:357.5px;top:642.5px;font-size:14px;line-height:20px;color:#606266;white-space:nowrap;">昵称<span style="display:inline-block;width:14px;padding-left:1.9600000000000002px">:</span></div><div class="a" style="left:399.5px;top:642.5px;font-size:14px;line-height:20px;color:#606266;white-space:nowrap;">啦啦啦</div><div class="a" style="left:562.5px;top:619.5px;font-size:14px;line-height:20px;color:#606266;white-space:nowrap;">金</div><div class="a" style="left:590.5px;top:619.5px;font-size:14px;line-height:20px;color:#606266;white-space:nowrap;">额<span style="display:inline-block;width:14px;padding-left:1.9600000000000002px">:</span></div><div class="a" style="left:621px;top:619.5px;font-size:14px;line-height:20px;color:#606266;white-space:nowrap;">¥</div><div class="a" style="left:632.5px;top:619.5px;font-size:14px;line-height:20px;color:#606266;white-space:nowrap;letter-spacing:0.3px">50.00</div><div class="a" style="left:562.5px;top:642.5px;font-size:14px;line-height:20px;color:#606266;white-space:nowrap;">手续费<span style="display:inline-block;width:14px;padding-left:1.9600000000000002px">:</span></div><div class="a" style="left:621px;top:642.5px;font-size:14px;line-height:20px;color:#606266;white-space:nowrap;">¥</div><div class="a" style="left:632.5px;top:642.5px;font-size:14px;line-height:20px;color:#606266;white-space:nowrap;letter-spacing:0.3px">0.00</div><div class="a" style="left:698.5px;top:631.0px;font-size:14px;line-height:20px;color:#606266;white-space:nowrap;">支付宝</div><div class="a" style="left:744.5px;top:631.0px;font-size:14px;line-height:20px;color:#606266;white-space:nowrap;">账号<span style="display:inline-block;width:14px;padding-left:1.9600000000000002px">:</span></div><div class="a" style="left:786.5px;top:631.0px;font-size:14px;line-height:20px;color:#606266;white-space:nowrap;letter-spacing:-0.3px">1</div><div class="a" style="left:903.5px;top:631.0px;font-size:14px;line-height:20px;color:#606266;white-space:nowrap;">无</div><div class="a" style="left:1022.5px;top:631.0px;font-size:14px;line-height:20px;color:#606266;white-space:nowrap;letter-spacing:0.55px">2024-01-05 21:49:33</div><div class="a" style="left:1338px;top:629.25px;width:56px;height:24px;background:#ecf5ff;border:1px solid #d9ecff;border-radius:4px;font-size:12px;line-height:23px;color:#409eff;text-align:center">审核中</div><div class="a" style="left:1546px;top:632.0px;font-size:14px;line-height:20px;color:#409eff;white-space:nowrap;">通过</div><div class="a" style="left:1592px;top:632.0px;font-size:14px;line-height:20px;color:#f56c6c;white-space:nowrap;">驳回</div><div class="a" style="left:240px;top:735px;width:1401px;height:1px;background:#f0f2f5"></div><div class="a" style="left:252px;top:694.0px;font-size:14px;line-height:20px;color:#606266;white-space:nowrap;letter-spacing:0.3px">6</div><div class="a" style="left:357.5px;top:682.5px;font-size:14px;line-height:20px;color:#606266;white-space:nowrap;">编号<span style="display:inline-block;width:14px;padding-left:1.9600000000000002px">:</span></div><div class="a" style="left:399.5px;top:682.5px;font-size:14px;line-height:20px;color:#606266;white-space:nowrap;letter-spacing:0.4px">247</div><div class="a" style="left:357.5px;top:705.5px;font-size:14px;line-height:20px;color:#606266;white-space:nowrap;">昵称<span style="display:inline-block;width:14px;padding-left:1.9600000000000002px">:</span></div><div class="a" style="left:399.5px;top:705.5px;font-size:14px;line-height:20px;color:#606266;white-space:nowrap;">啦啦啦</div><div class="a" style="left:562.5px;top:682.5px;font-size:14px;line-height:20px;color:#606266;white-space:nowrap;">金</div><div class="a" style="left:590.5px;top:682.5px;font-size:14px;line-height:20px;color:#606266;white-space:nowrap;">额<span style="display:inline-block;width:14px;padding-left:1.9600000000000002px">:</span></div><div class="a" style="left:621px;top:682.5px;font-size:14px;line-height:20px;color:#606266;white-space:nowrap;">¥</div><div class="a" style="left:632.5px;top:682.5px;font-size:14px;line-height:20px;color:#606266;white-space:nowrap;letter-spacing:0.3px">800.00</div><div class="a" style="left:562.5px;top:705.5px;font-size:14px;line-height:20px;color:#606266;white-space:nowrap;">手续费<span style="display:inline-block;width:14px;padding-left:1.9600000000000002px">:</span></div><div class="a" style="left:621px;top:705.5px;font-size:14px;line-height:20px;color:#606266;white-space:nowrap;">¥</div><div class="a" style="left:632.5px;top:705.5px;font-size:14px;line-height:20px;color:#606266;white-space:nowrap;letter-spacing:0.3px">0.00</div><div class="a" style="left:698.5px;top:694.0px;font-size:14px;line-height:20px;color:#606266;white-space:nowrap;">余额</div><div class="a" style="left:903.5px;top:694.0px;font-size:14px;line-height:20px;color:#606266;white-space:nowrap;">无</div><div class="a" style="left:1022.5px;top:694.0px;font-size:14px;line-height:20px;color:#606266;white-space:nowrap;letter-spacing:0.55px">2023-12-27 15:32:21</div><div class="a" style="left:1338px;top:692.25px;width:56px;height:24px;background:#ecf5ff;border:1px solid #d9ecff;border-radius:4px;font-size:12px;line-height:23px;color:#409eff;text-align:center">审核中</div><div class="a" style="left:1546px;top:695.0px;font-size:14px;line-height:20px;color:#409eff;white-space:nowrap;">通过</div><div class="a" style="left:1592px;top:695.0px;font-size:14px;line-height:20px;color:#f56c6c;white-space:nowrap;">驳回</div><div class="a" style="left:240px;top:736px;width:1401px;height:63px;background:#fafafa"></div><div class="a" style="left:240px;top:799px;width:1401px;height:1px;background:#f0f2f5"></div><div class="a" style="left:252px;top:757.5px;font-size:14px;line-height:20px;color:#606266;white-space:nowrap;letter-spacing:0.3px">5</div><div class="a" style="left:357.5px;top:746.0px;font-size:14px;line-height:20px;color:#606266;white-space:nowrap;">编号<span style="display:inline-block;width:14px;padding-left:1.9600000000000002px">:</span></div><div class="a" style="left:399.5px;top:746.0px;font-size:14px;line-height:20px;color:#606266;white-space:nowrap;letter-spacing:0.4px">247</div><div class="a" style="left:357.5px;top:769.0px;font-size:14px;line-height:20px;color:#606266;white-space:nowrap;">昵称<span style="display:inline-block;width:14px;padding-left:1.9600000000000002px">:</span></div><div class="a" style="left:399.5px;top:769.0px;font-size:14px;line-height:20px;color:#606266;white-space:nowrap;">啦啦啦</div><div class="a" style="left:562.5px;top:746.0px;font-size:14px;line-height:20px;color:#606266;white-space:nowrap;">金</div><div class="a" style="left:590.5px;top:746.0px;font-size:14px;line-height:20px;color:#606266;white-space:nowrap;">额<span style="display:inline-block;width:14px;padding-left:1.9600000000000002px">:</span></div><div class="a" style="left:621px;top:746.0px;font-size:14px;line-height:20px;color:#606266;white-space:nowrap;">¥</div><div class="a" style="left:632.5px;top:746.0px;font-size:14px;line-height:20px;color:#606266;white-space:nowrap;letter-spacing:0.3px">400.00</div><div class="a" style="left:562.5px;top:769.0px;font-size:14px;line-height:20px;color:#606266;white-space:nowrap;">手续费<span style="display:inline-block;width:14px;padding-left:1.9600000000000002px">:</span></div><div class="a" style="left:621px;top:769.0px;font-size:14px;line-height:20px;color:#606266;white-space:nowrap;">¥</div><div class="a" style="left:632.5px;top:769.0px;font-size:14px;line-height:20px;color:#606266;white-space:nowrap;letter-spacing:0.3px">0.00</div><div class="a" style="left:698.5px;top:757.5px;font-size:14px;line-height:20px;color:#606266;white-space:nowrap;">余额</div><div class="a" style="left:903.5px;top:757.5px;font-size:14px;line-height:20px;color:#606266;white-space:nowrap;">无</div><div class="a" style="left:1022.5px;top:757.5px;font-size:14px;line-height:20px;color:#606266;white-space:nowrap;letter-spacing:0.55px">2023-09-30 20:59:40</div><div class="a" style="left:1338px;top:748px;width:68px;height:24px;background:#f0f9eb;border:1px solid #e1f3d8;border-radius:4px;font-size:12px;line-height:23px;color:#67c23a;text-align:center">审核通过</div><div class="a" style="left:1338px;top:772px;font-size:12px;line-height:16px;color:#606266;white-space:nowrap">时间<span style="display:inline-block;width:12px;padding-left:1.7px">:</span><span style="letter-spacing:0.25px">2023-10-03 12:11:34</span></div><div class="a" style="left:1503px;top:363.5px;width:135px;height:437px;border:6.3px solid #ff3a7a"></div><div class="a" style="left:1189px;top:819.5px;font-size:14px;line-height:20px;color:#606266;white-space:nowrap;">共 6 条</div><div class="a" style="left:1251px;top:814px;width:128px;height:32px;border:1px solid #dcdfe6;border-radius:4px;background:#fff"></div><div class="a" style="left:1281px;top:819.5px;font-size:14px;line-height:20px;color:#606266;white-space:nowrap;">10条/页</div><svg class="a" style="left:1354px;top:826px" width="12" height="7" viewBox="0 0 12 7"><path d="M1 1L6 6L11 1" stroke="#a8abb2" stroke-width="1.1" fill="none"/></svg><div class="a" style="left:1395px;top:814px;width:32px;height:32px;border-radius:2px;background:#f4f5f8"></div><svg class="a" style="left:1407px;top:825px" width="7" height="10" viewBox="0 0 7 10"><path d="M5.5 1L1.5 5L5.5 9" stroke="#c0c4cc" stroke-width="1.1" fill="none"/></svg><div class="a" style="left:1435px;top:814px;width:32px;height:32px;border-radius:2px;background:#409eff;color:#fff;font-size:14px;-webkit-text-stroke:0.3px;line-height:32px;text-align:center">1</div><div class="a" style="left:1475px;top:814px;width:32px;height:32px;border-radius:2px;background:#f4f5f8"></div><svg class="a" style="left:1488px;top:825px" width="7" height="10" viewBox="0 0 7 10"><path d="M1.5 1L5.5 5L1.5 9" stroke="#c0c4cc" stroke-width="1.1" fill="none"/></svg><div class="a" style="left:1527px;top:819.5px;font-size:14px;line-height:20px;color:#606266;white-space:nowrap;">前往</div><div class="a" style="left:1563px;top:814px;width:56px;height:32px;border:1px solid #dcdfe6;border-radius:4px;background:#fff;font-size:14px;line-height:30px;text-align:center;color:#606266">1</div><div class="a" style="left:1627px;top:819.5px;font-size:14px;line-height:20px;color:#606266;white-space:nowrap;">页</div><div class="a" style="left:1642px;top:546px;width:40px;height:40px;border-radius:6px;background:#409eff"></div><svg class="a" style="left:1655px;top:556.5px" width="14" height="14" viewBox="0 0 14 14"><path d="M7 0.8L8.4 2.4L10.5 1.9L11.1 4L13.1 4.7L12.5 6.8L13.6 8.5L11.8 9.6L11.6 11.8L9.5 11.7L8.1 13.3L7 12.2L5.9 13.3L4.5 11.7L2.4 11.8L2.2 9.6L0.4 8.5L1.5 6.8L0.9 4.7L2.9 4L3.5 1.9L5.6 2.4Z" stroke="#fff" stroke-width="1.1" fill="none" stroke-linejoin="round"/><circle cx="7" cy="7.2" r="2.3" stroke="#fff" stroke-width="1.1" fill="none"/></svg><div class="a" style="left:0;top:112px;width:1673px;height:1px;background:#5a5b5e"></div></body></html>
